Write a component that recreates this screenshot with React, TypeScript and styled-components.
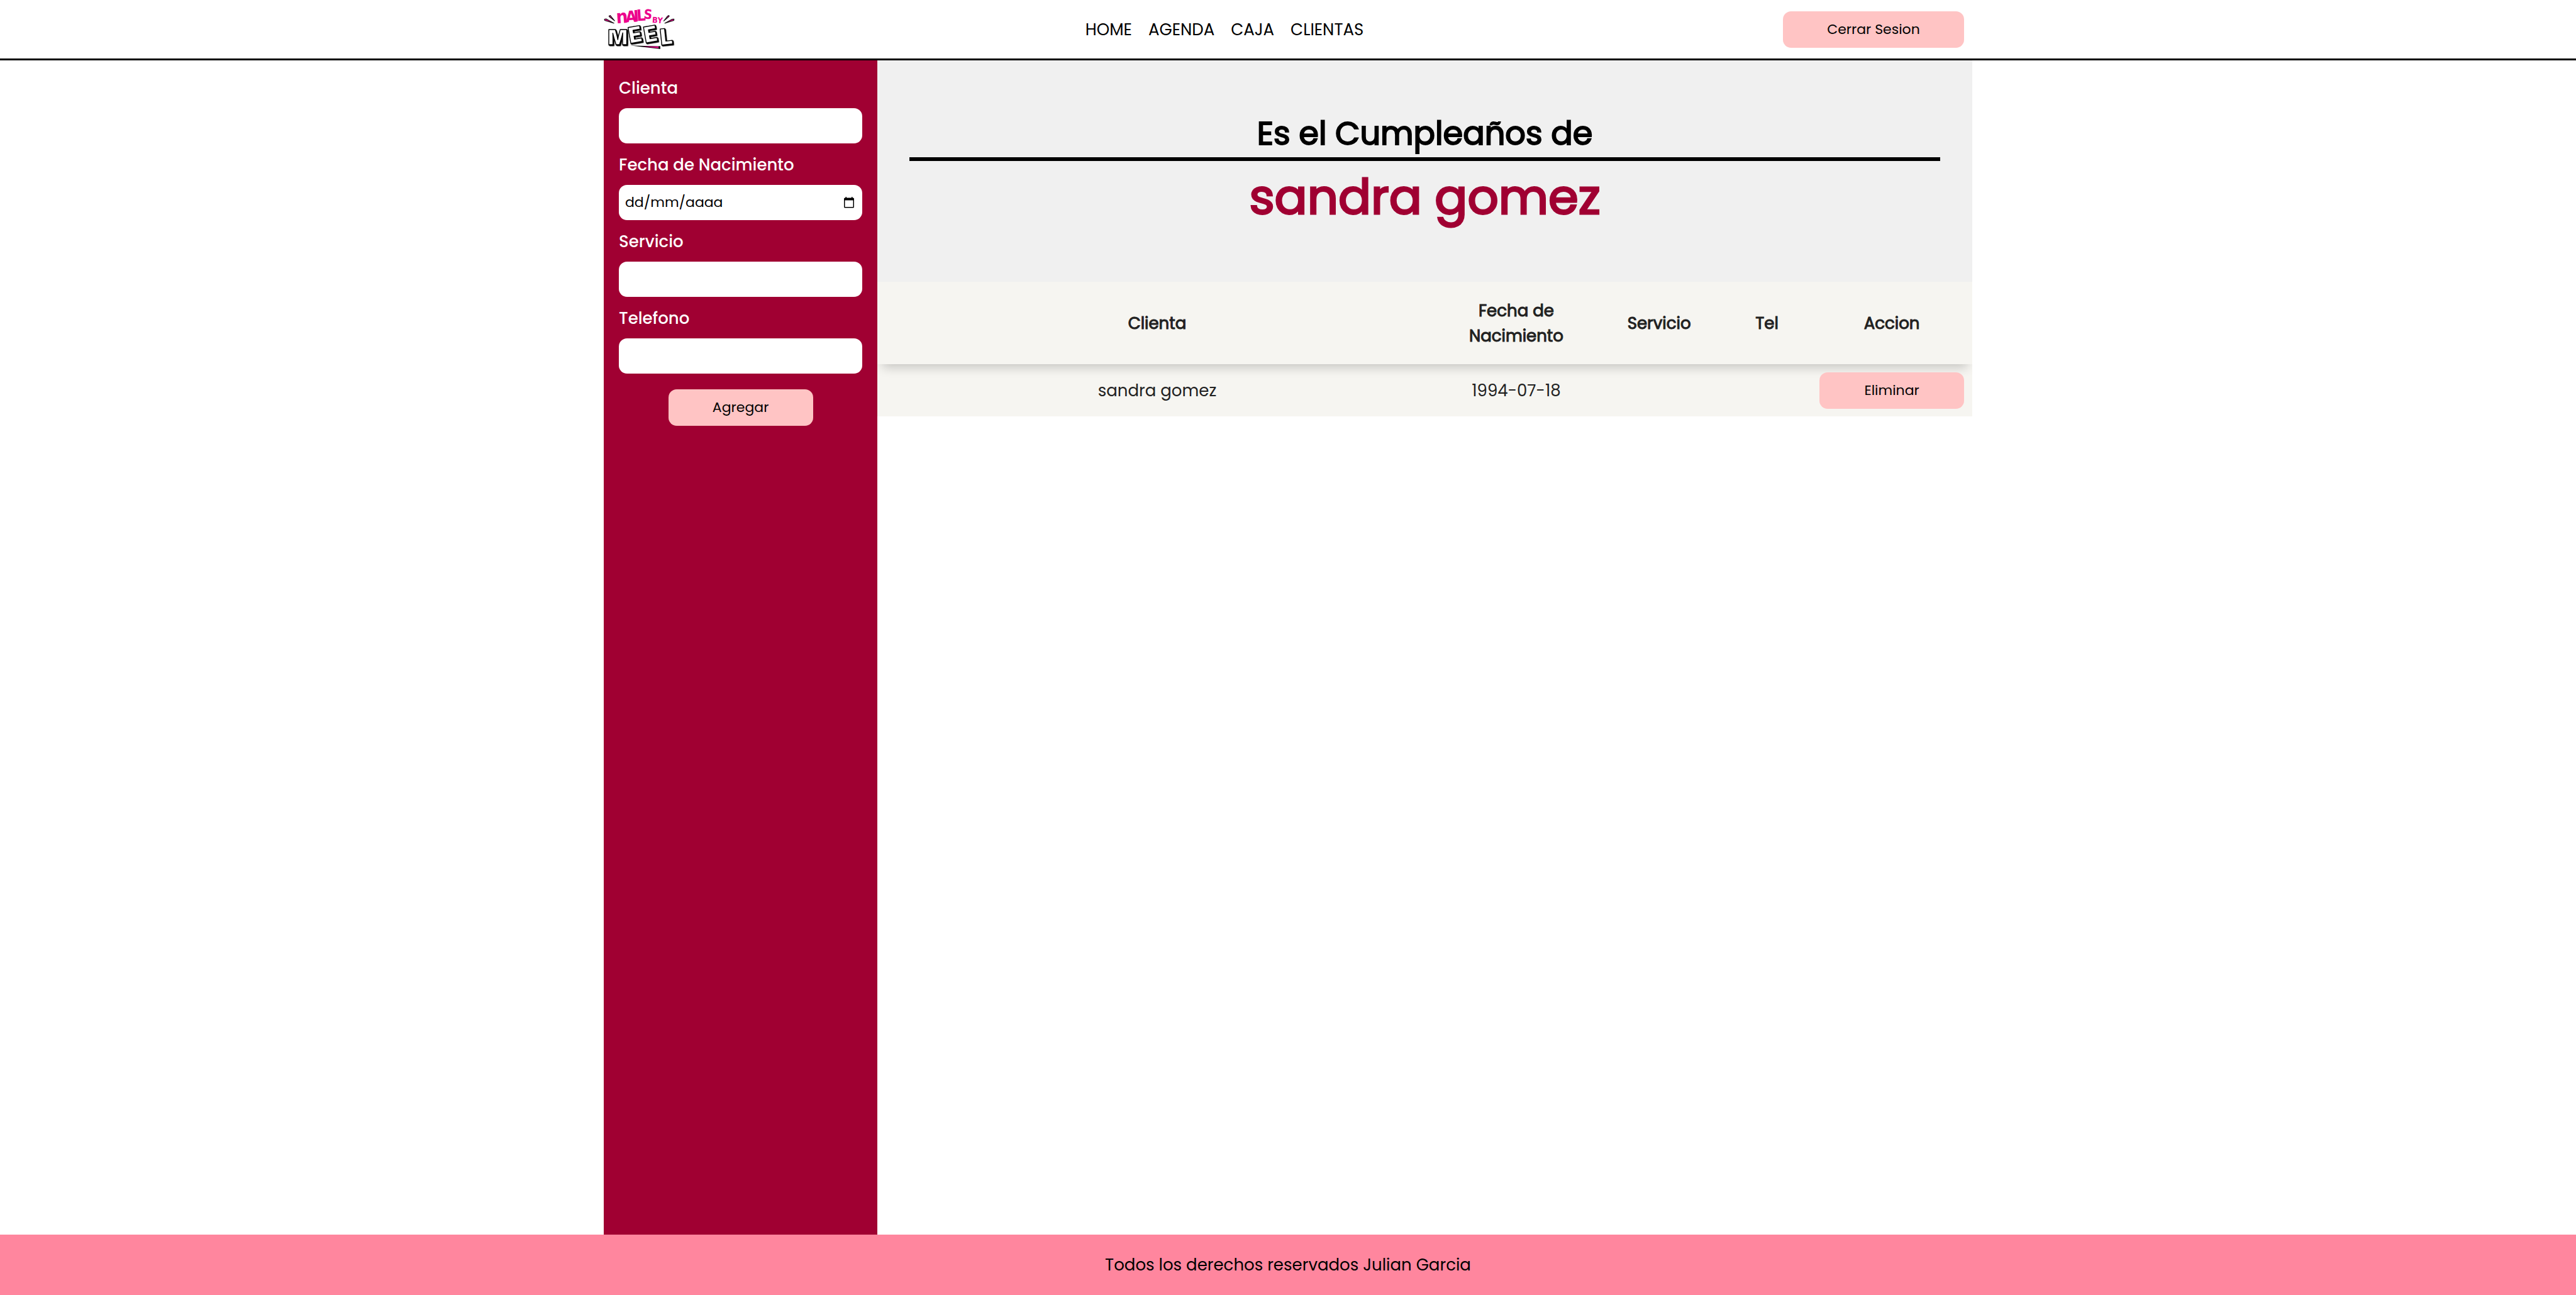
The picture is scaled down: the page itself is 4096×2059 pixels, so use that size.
import React from "react";
import styled, { createGlobalStyle } from "styled-components";

const colors = {
  wine: "#a00032",
  blush: "#ffc4c4",
  rose: "#ff869e",
  hero: "#f0f0f0",
  table: "#f6f5f1",
  ink: "#212121",
  magenta: "#ec008c",
};

const GlobalStyle = createGlobalStyle`
  body {
    margin: 0;
    background: #fff;
    color: #000;
    font-family: Poppins, Inter, "Liberation Sans", sans-serif;
    font-size: 26px;
    line-height: 40px;
  }
  button, input { font-family: inherit; }
`;

const Page = styled.div`
  display: flex;
  flex-direction: column;
  min-height: 100vh;
`;

const Header = styled.header`
  border-bottom: 3px solid #000;
`;

const HeaderInner = styled.div`
  box-sizing: border-box;
  display: flex;
  align-items: center;
  justify-content: space-between;
  width: 100%;
  max-width: 2176px;
  min-height: 93px;
  margin: 0 auto;
  padding-right: 13px;
`;

const LogoLink = styled.a`
  display: flex;
`;

const Nav = styled.nav`
  display: flex;
  gap: 26px;
  padding-right: 13px;
`;

const NavLink = styled.a`
  color: #000;
  text-decoration: none;
`;

const Button = styled.button<{ $wide?: boolean }>`
  width: ${(p) => (p.$wide ? 288 : 230)}px;
  height: 58px;
  padding: 0;
  border: 0;
  border-radius: 13px;
  background: ${colors.blush};
  color: #000;
  font-size: 22px;
  line-height: 32px;
  cursor: pointer;
`;

const Main = styled.main`
  display: flex;
  flex: 1;
  width: 100%;
  max-width: 2176px;
  margin: 0 auto;
`;

const Sidebar = styled.aside`
  box-sizing: border-box;
  flex: 0 0 20%;
  min-width: 0;
  padding: 24px;
  background: ${colors.wine};
`;

const Form = styled.form`
  display: flex;
  flex-direction: column;
  align-items: center;
  gap: 25px;
`;

const Fields = styled.div`
  display: flex;
  flex-direction: column;
  gap: 14px;
  width: 100%;
`;

const Field = styled.div`
  display: flex;
  flex-direction: column;
  gap: 12px;
`;

const Label = styled.label`
  color: #fff;
  font-weight: 500;
`;

const InputBox = styled.div`
  box-sizing: border-box;
  display: flex;
  align-items: center;
  height: 56px;
  padding: 0 12px 0 10px;
  border-radius: 13px;
  background: #fff;
`;

const Input = styled.input`
  flex: 1;
  width: 100%;
  min-width: 0;
  padding: 0;
  border: 0;
  outline: 0;
  background: transparent;
  color: #000;
  font-size: 22px;
  line-height: 32px;

  &::placeholder {
    color: #000;
    opacity: 1;
  }
`;

const PickerButton = styled.button`
  display: flex;
  padding: 0;
  border: 0;
  background: none;
  cursor: pointer;
`;

const Content = styled.div`
  flex: 1;
  min-width: 0;
`;

const Hero = styled.section`
  padding: 78px 51px 77px;
  background: ${colors.hero};
  text-align: center;
`;

const HeroTitle = styled.h1`
  margin: 0;
  border-bottom: 6px solid #000;
  font-size: 51px;
  font-weight: 400;
  line-height: 76px;
  -webkit-text-stroke: 2px currentColor;
`;

const HeroName = styled.h2`
  margin: 0;
  color: ${colors.wine};
  font-size: 77px;
  font-weight: 400;
  line-height: 115px;
  -webkit-text-stroke: 3px currentColor;
`;

const TableClip = styled.div`
  overflow: hidden;
`;

const Table = styled.table`
  width: 100%;
  table-layout: fixed;
  border-collapse: collapse;
  background: ${colors.table};
  color: ${colors.ink};
  text-align: center;
`;

const Head = styled.thead`
  box-shadow: 0 13px 16px -8px rgba(0, 0, 0, 0.2);
`;

const HeadCell = styled.th<{ $width: number }>`
  box-sizing: border-box;
  width: ${(p) => p.$width}%;
  height: 131px;
  padding: 0 13px;
  font-weight: 400;
  -webkit-text-stroke: 1px currentColor;
`;

const Cell = styled.td`
  box-sizing: border-box;
  height: 83px;
  padding: 0 13px;
`;

const Footer = styled.footer`
  display: flex;
  align-items: center;
  justify-content: center;
  min-height: 96px;
  background: ${colors.rose};
`;

const LogoDrawing = styled.svg`
  overflow: visible;
`;

const Scribble = styled.text`
  fill: ${colors.magenta};
  font-family: "Liberation Sans Narrow", "DejaVu Sans Condensed", sans-serif;
  font-weight: 700;
`;

const BlockLetters = styled.text`
  fill: #fff;
  stroke: #000;
  stroke-width: 5px;
  stroke-linejoin: round;
  font-family: Inter, sans-serif;
  font-weight: 900;
  filter: drop-shadow(3px 3px 0 #000) drop-shadow(3px 3px 0 #000);
`;

function Logo() {
  return (
    <LogoDrawing width="112" height="70" viewBox="60 44 420 262" role="img" aria-label="Nails by Meel">
      <g fill={colors.magenta} stroke="#111" strokeWidth="4" strokeLinejoin="round">
        <path d="M64 113L74 111L121 137L66 121Z" />
        <path d="M91 94L99 91L125 123L94 99Z" />
        <path d="M449 91L450 97L418 124L441 94Z" />
        <path d="M479 112L478 121L424 137L468 113Z" />
      </g>
      <Scribble>
        <tspan x="136" y="138" rotate="-4" fontSize="110">n</tspan>
        <tspan x="192 240 258" y="132 128 124" rotate="-3 -4 -4" fontSize="94">AIL</tspan>
        <tspan x="296" y="108" rotate="6" fontSize="78">S</tspan>
      </Scribble>
      <Scribble x="348 379" y="134 136" rotate="4 6" fontSize="48">
        BY
      </Scribble>
      <BlockLetters>
        <tspan x="84" y="266" rotate="0" fontSize="124">M</tspan>
        <tspan x="216 308 400" y="258 256 268" rotate="-10 -10 -6" fontSize="132">EEL</tspan>
      </BlockLetters>
      <path d="M218 270L386 274L397 273L397 291L386 289Z" fill="#000" />
      <path d="M290 275L386 276L388 286Z" fill={colors.magenta} />
    </LogoDrawing>
  );
}

function CalendarIcon() {
  return (
    <svg width="18" height="18" viewBox="0 0 18 18" aria-hidden="true">
      <path
        fill="#000"
        fillRule="evenodd"
        d="M3.5 0H5V1.5H13V0H14.5V1.5H15.5Q17 1.5 17 3V16Q17 17.5 15.5 17.5H2.5Q1 17.5 1 16V3Q1 1.5 2.5 1.5H3.5ZM2.5 5.5V16H15.5V5.5Z"
      />
    </svg>
  );
}

const links = ["HOME", "AGENDA", "CAJA", "CLIENTAS"];

const fields = [
  { id: "clienta", label: "Clienta" },
  { id: "nacimiento", label: "Fecha de Nacimiento", date: true },
  { id: "servicio", label: "Servicio" },
  { id: "telefono", label: "Telefono" },
];

const columns = [
  { title: "Clienta", width: 51.1 },
  { title: "Fecha de Nacimiento", width: 14.5 },
  { title: "Servicio", width: 11.6 },
  { title: "Tel", width: 8.1 },
  { title: "Accion", width: 14.7 },
];

const clients = [{ name: "sandra gomez", birth: "1994-07-18", service: "", phone: "" }];

export default function App() {
  return (
    <Page>
      <GlobalStyle />
      <Header>
        <HeaderInner>
          <LogoLink href="#">
            <Logo />
          </LogoLink>
          <Nav>
            {links.map((l) => (
              <NavLink key={l} href={`#${l.toLowerCase()}`}>
                {l}
              </NavLink>
            ))}
          </Nav>
          <Button $wide type="button">
            Cerrar Sesion
          </Button>
        </HeaderInner>
      </Header>
      <Main>
        <Sidebar>
          <Form onSubmit={(e) => e.preventDefault()}>
            <Fields>
              {fields.map((f) => (
                <Field key={f.id}>
                  <Label htmlFor={f.id}>{f.label}</Label>
                  <InputBox>
                    <Input id={f.id} type="text" placeholder={f.date ? "dd/mm/aaaa" : undefined} />
                    {f.date && (
                      <PickerButton type="button" aria-label="Abrir calendario">
                        <CalendarIcon />
                      </PickerButton>
                    )}
                  </InputBox>
                </Field>
              ))}
            </Fields>
            <Button type="submit">Agregar</Button>
          </Form>
        </Sidebar>
        <Content>
          <Hero>
            <HeroTitle>Es el Cumpleaños de</HeroTitle>
            <HeroName>sandra gomez</HeroName>
          </Hero>
          <TableClip>
            <Table>
              <Head>
                <tr>
                  {columns.map((c) => (
                    <HeadCell key={c.title} $width={c.width} scope="col">
                      {c.title}
                    </HeadCell>
                  ))}
                </tr>
              </Head>
              <tbody>
                {clients.map((c) => (
                  <tr key={c.name}>
                    <Cell>{c.name}</Cell>
                    <Cell>{c.birth}</Cell>
                    <Cell>{c.service}</Cell>
                    <Cell>{c.phone}</Cell>
                    <Cell>
                      <Button type="button">Eliminar</Button>
                    </Cell>
                  </tr>
                ))}
              </tbody>
            </Table>
          </TableClip>
        </Content>
      </Main>
      <Footer>Todos los derechos reservados Julian Garcia</Footer>
    </Page>
  );
}
